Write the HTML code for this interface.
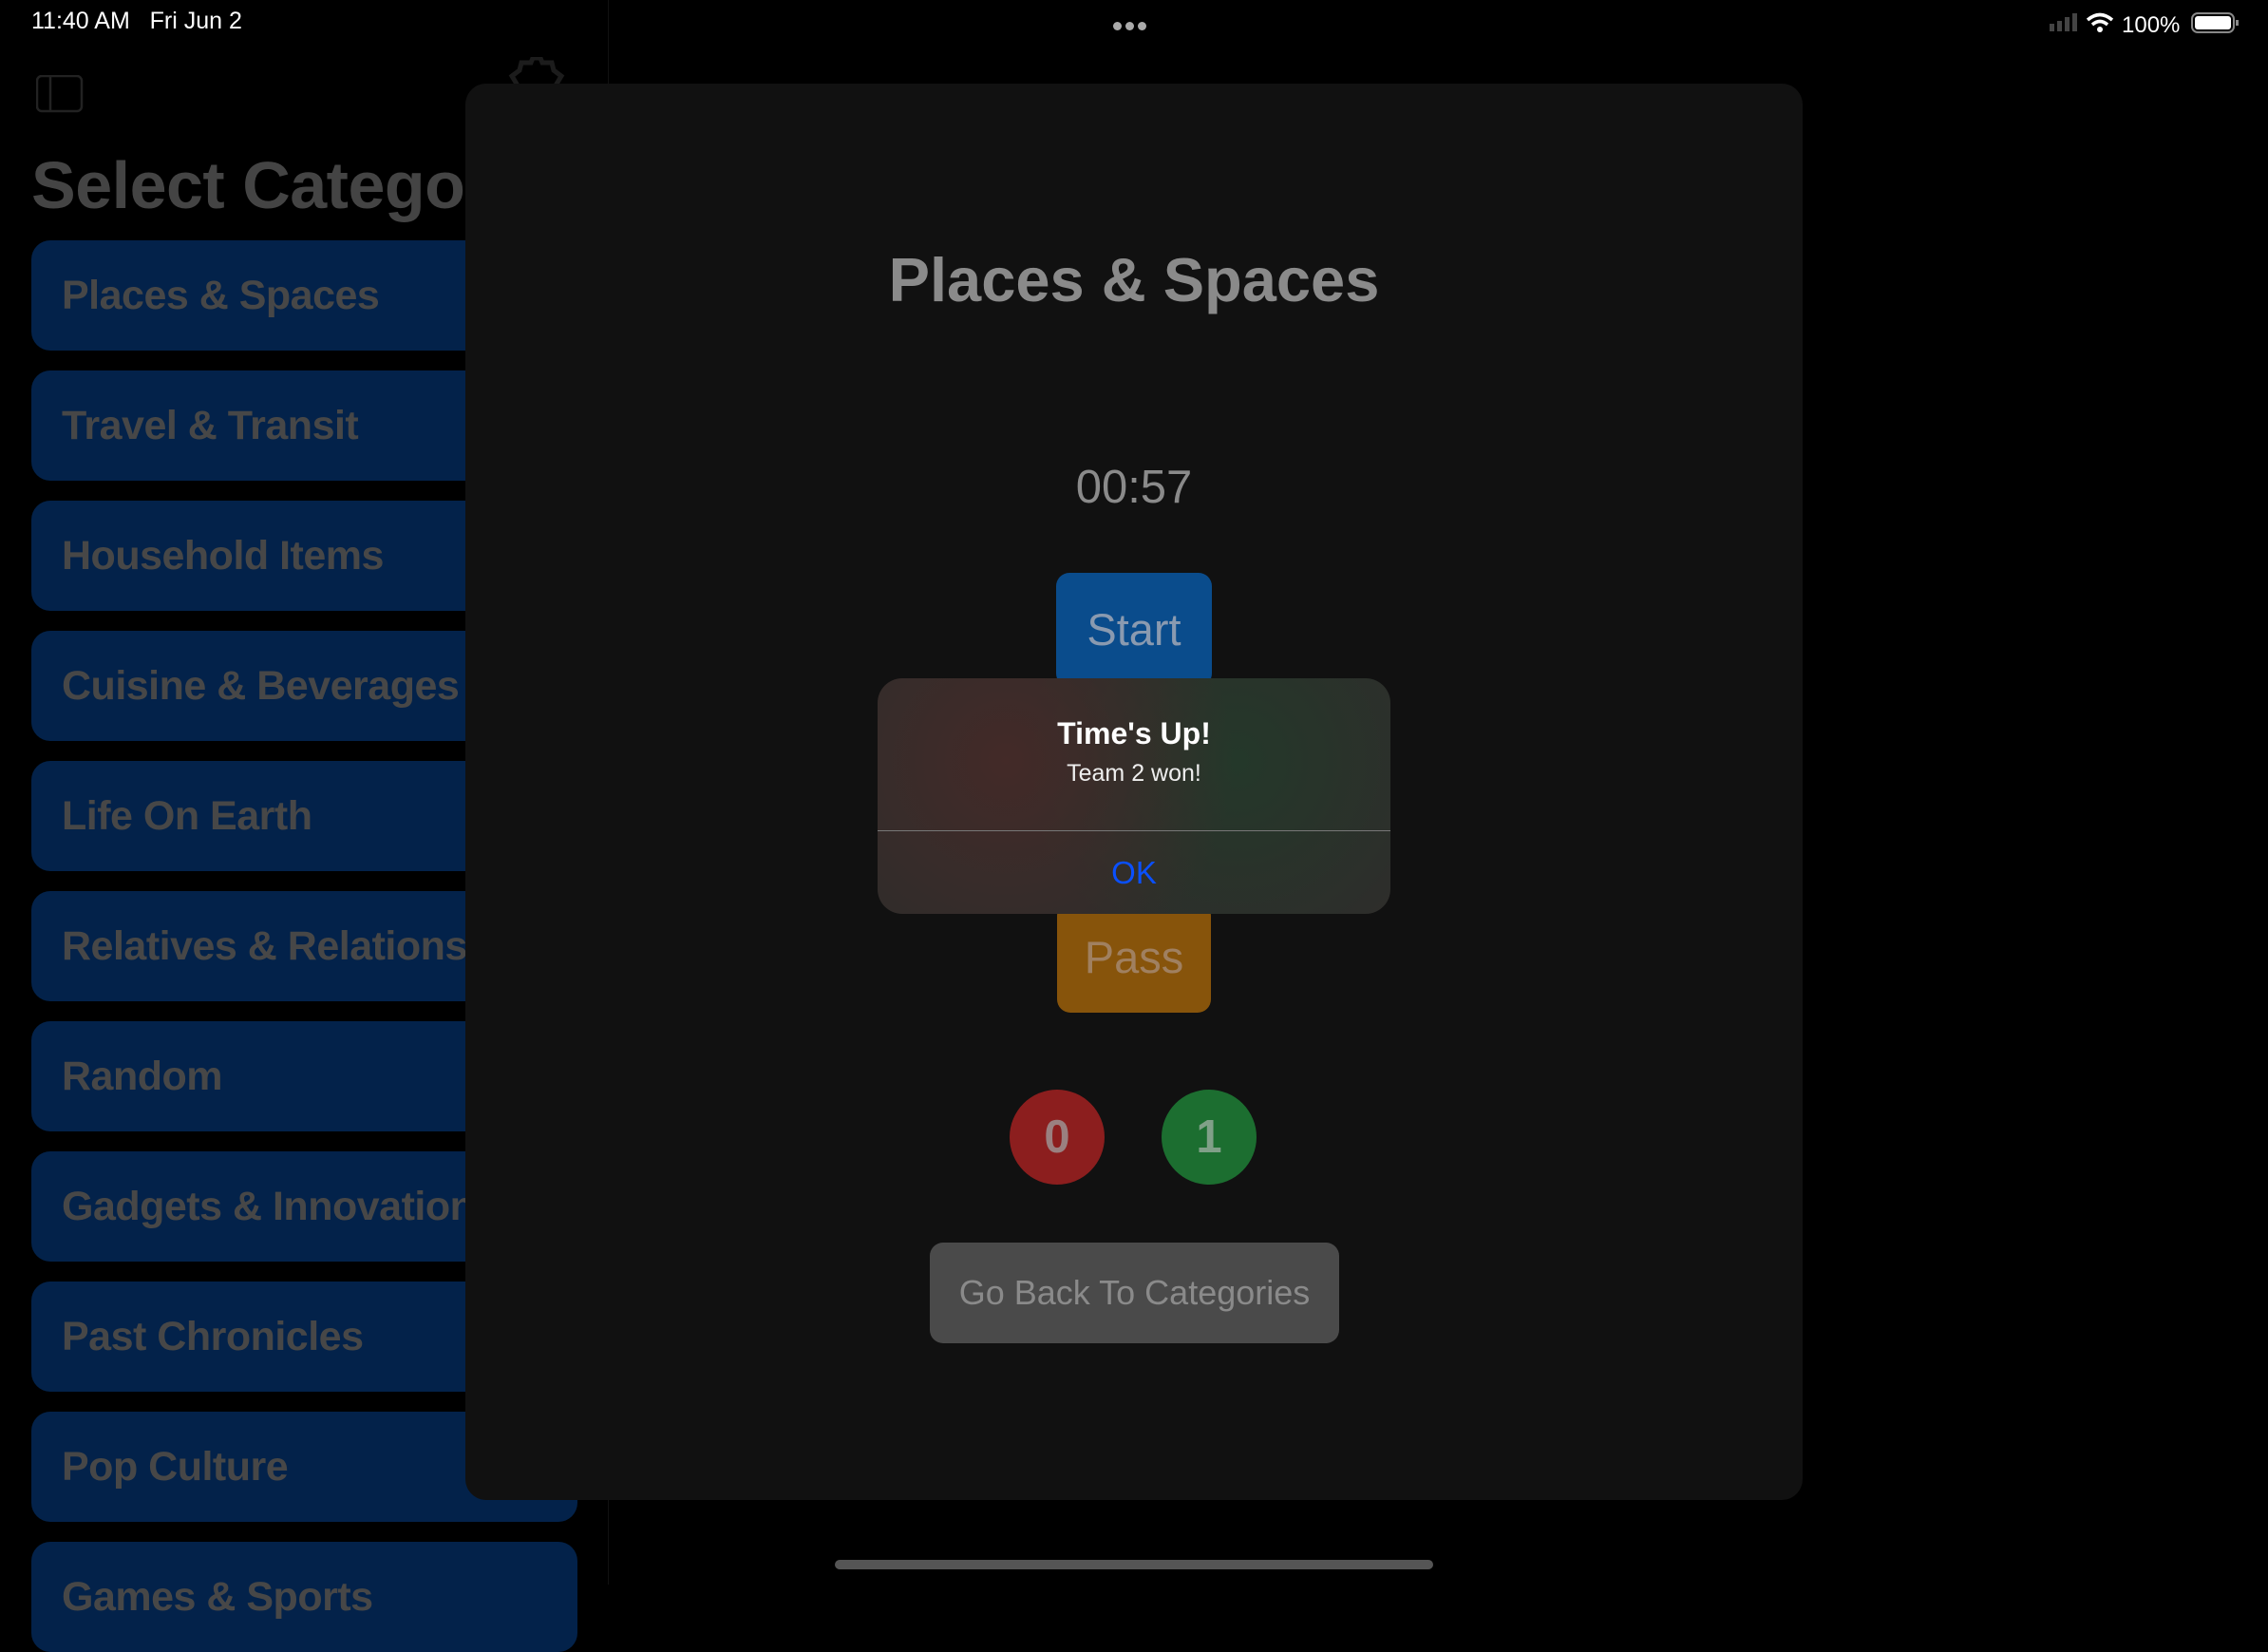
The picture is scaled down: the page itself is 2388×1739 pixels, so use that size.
<!DOCTYPE html>
<html><head><meta charset="utf-8"><style>
*{margin:0;padding:0;box-sizing:border-box}
body{width:2388px;height:1668px;background:#000;position:relative;overflow:hidden;font-family:"Liberation Sans",sans-serif}
.abs{position:absolute}
.cat{position:absolute;left:33px;width:575px;height:116px;background:#03224a;border-radius:20px;color:#474747;font-weight:bold;font-size:43px;line-height:116px;padding-left:32px;white-space:nowrap;overflow:hidden;letter-spacing:-0.5px}
.c{text-align:center}
</style></head><body>
<div class="abs" style="left:33px;top:8px;color:#fff;font-size:25px;">11:40 AM&nbsp;&nbsp;&nbsp;Fri Jun 2</div>
<div class="abs" style="left:1172px;top:19px;">
<span style="display:inline-block;width:9px;height:9px;border-radius:50%;background:#aaa;margin-right:4px"></span><span style="display:inline-block;width:9px;height:9px;border-radius:50%;background:#aaa;margin-right:4px"></span><span style="display:inline-block;width:9px;height:9px;border-radius:50%;background:#aaa"></span></div>
<svg class="abs" style="left:2156px;top:10px" width="230" height="30">
<rect x="2" y="15" width="5" height="8" fill="#444"/><rect x="10" y="12" width="5" height="11" fill="#444"/><rect x="18" y="8" width="5" height="15" fill="#444"/><rect x="26" y="4" width="5" height="19" fill="#444"/>
<path d="M42 11 Q55 0 68 11" stroke="#fff" stroke-width="3.5" fill="none"/><path d="M47 16 Q55 9 63 16" stroke="#fff" stroke-width="3.5" fill="none"/><circle cx="55" cy="21" r="3" fill="#fff"/>
<text x="78" y="24" fill="#fff" font-size="24" font-family="Liberation Sans">100%</text>
<rect x="152" y="4" width="44" height="20" rx="6" fill="none" stroke="#888" stroke-width="2"/><rect x="155" y="7" width="38" height="14" rx="3" fill="#fff"/><rect x="198" y="11" width="3" height="6" fill="#888"/>
</svg>
<div class="abs" style="left:640px;top:0;width:1px;height:1668px;background:#111"></div>
<svg class="abs" style="left:38px;top:79px" width="50" height="40"><rect x="1" y="1" width="47" height="37" rx="5" fill="none" stroke="#222" stroke-width="2.5"/><line x1="15" y1="1" x2="15" y2="38" stroke="#222" stroke-width="2.5"/></svg>
<svg class="abs" style="left:533px;top:60px" width="64" height="40"><path d="M12 30 L6 20 L14 14 L16 6 L26 6 L28 1 L36 1 L38 6 L48 6 L50 14 L58 20 L52 30" stroke="#1c1c1c" stroke-width="5" fill="none"/></svg>
<div class="abs" style="left:33px;top:155px;color:#444;font-size:70px;font-weight:bold;white-space:nowrap;letter-spacing:-0.5px">Select Category</div>
<div class="cat" style="top:253px">Places &amp; Spaces</div>
<div class="cat" style="top:390px">Travel &amp; Transit</div>
<div class="cat" style="top:527px">Household Items</div>
<div class="cat" style="top:664px">Cuisine &amp; Beverages</div>
<div class="cat" style="top:801px">Life On Earth</div>
<div class="cat" style="top:938px">Relatives &amp; Relationships</div>
<div class="cat" style="top:1075px">Random</div>
<div class="cat" style="top:1212px">Gadgets &amp; Innovations</div>
<div class="cat" style="top:1349px">Past Chronicles</div>
<div class="cat" style="top:1486px">Pop Culture</div>
<div class="cat" style="top:1623px">Games &amp; Sports</div>

<div class="abs" style="left:490px;top:88px;width:1408px;height:1491px;background:#111;border-radius:22px"></div>
<div class="abs c" style="left:490px;width:1408px;top:257px;color:#8a8a8a;font-size:65px;font-weight:bold">Places &amp; Spaces</div>
<div class="abs c" style="left:490px;width:1408px;top:485px;color:#8a8a8a;font-size:49px">00:57</div>
<div class="abs c" style="left:1112px;top:603px;width:164px;height:120px;background:#0a4c8c;border-radius:14px;color:#8a9ab0;font-size:47px;line-height:120px">Start</div>
<div class="abs c" style="left:1113px;top:950px;width:162px;height:116px;background:#87540b;border-radius:14px;color:#a08060;font-size:47px;line-height:116px">Pass</div>
<div class="abs c" style="left:1063px;top:1147px;width:100px;height:100px;border-radius:50%;background:#8c1e1e;color:#9a8080;font-size:49px;font-weight:bold;line-height:100px">0</div>
<div class="abs c" style="left:1223px;top:1147px;width:100px;height:100px;border-radius:50%;background:#1c6e30;color:#80a088;font-size:49px;font-weight:bold;line-height:100px">1</div>
<div class="abs c" style="left:979px;top:1308px;width:431px;height:106px;background:#4a4a4a;border-radius:14px;color:#8a8a8a;font-size:36px;line-height:106px">Go Back To Categories</div>

<div class="abs" style="left:924px;top:714px;width:540px;height:248px;border-radius:26px;overflow:hidden;background:radial-gradient(circle at 25% 35%,#432a28 0%,rgba(60,42,40,0) 55%),radial-gradient(circle at 70% 35%,#24382a 0%,rgba(36,56,42,0) 55%),#2e2d2b">
<div class="c" style="position:absolute;left:0;width:540px;top:40px;color:#fff;font-size:32px;font-weight:bold">Time's Up!</div>
<div class="c" style="position:absolute;left:0;width:540px;top:86px;color:#eee;font-size:25px">Team 2 won!</div>
<div style="position:absolute;left:0;top:160px;width:540px;height:1px;background:#777"></div>
<div class="c" style="position:absolute;left:0;width:540px;top:186px;color:#0a50ff;font-size:33px">OK</div>
</div>
<div class="abs" style="left:879px;top:1642px;width:630px;height:10px;border-radius:5px;background:#555"></div>
</body></html>
